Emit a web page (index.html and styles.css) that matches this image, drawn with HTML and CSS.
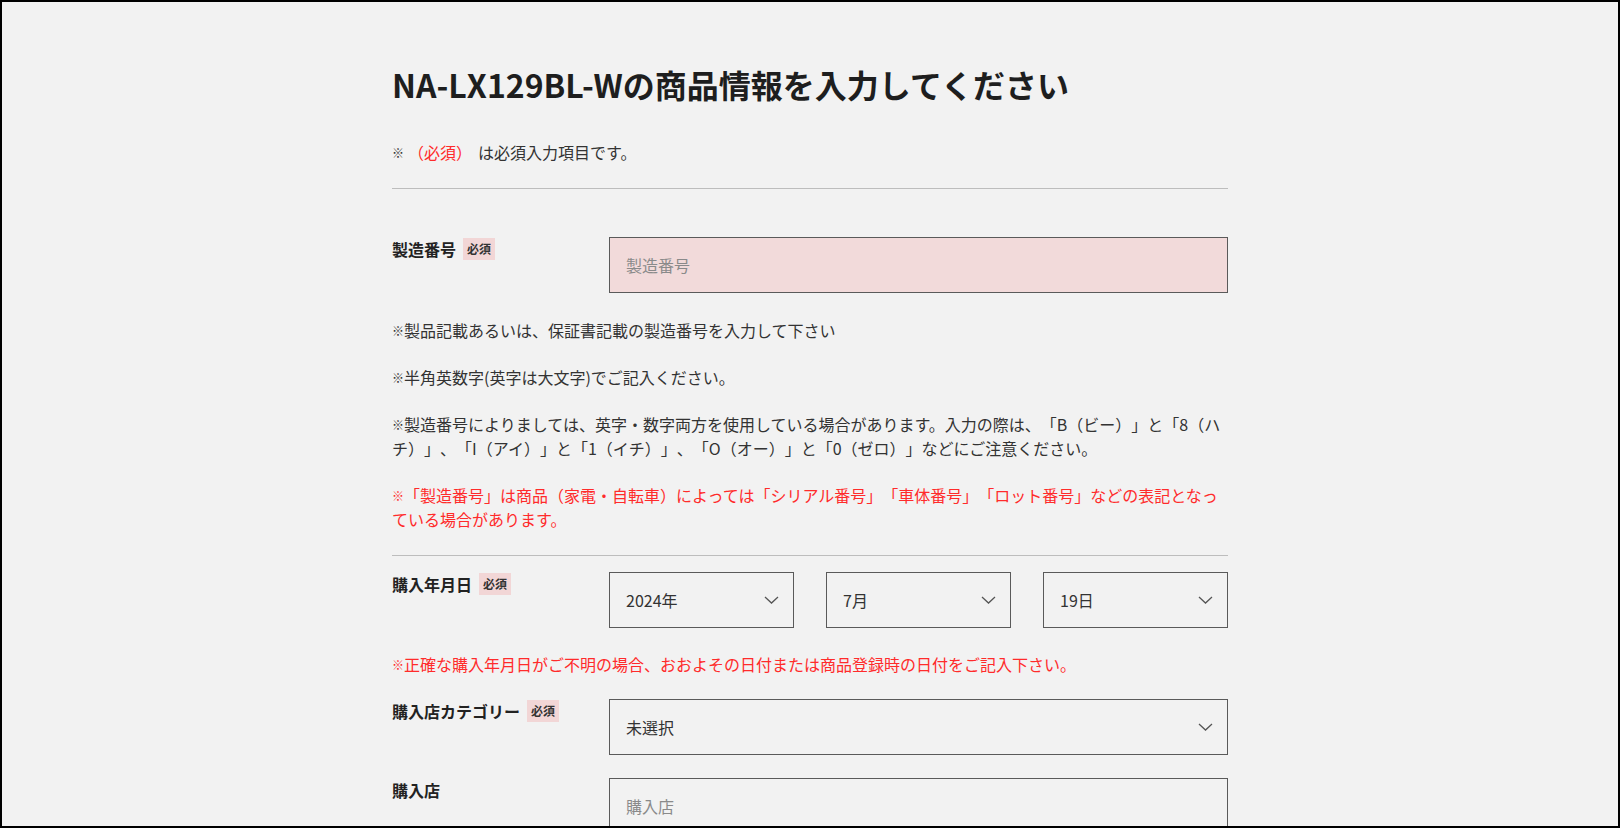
FILE: index.html
```html
<!DOCTYPE html>
<html lang="ja">
<head>
<meta charset="utf-8">
<title>商品情報入力</title>
<link rel="stylesheet" href="styles.css">
</head>
<body>
<main class="page">
  <h1 class="title">NA-LX129BL-Wの商品情報を入力してください</h1>
  <p class="notice"><span class="kome">※</span><span class="red req">（必須）</span>は必須入力項目です。</p>
  <hr class="divider divider-top">

  <section class="section section-serial">
    <div class="row">
      <div class="label">製造番号<span class="badge">必須</span></div>
      <input class="field field-pink" type="text" placeholder="製造番号">
    </div>
    <div class="help">
      <p><span class="kome">※</span>製品記載あるいは、保証書記載の製造番号を入力して下さい</p>
      <p><span class="kome">※</span>半角英数字(英字は大文字)でご記入ください。</p>
      <p><span class="kome">※</span>製造番号によりましては、英字・数字両方を使用している場合があります。入力の際は、「B（ビー）」と「8（ハチ）」、「I（アイ）」と「1（イチ）」、「O（オー）」と「0（ゼロ）」などにご注意ください。</p>
      <p class="red"><span class="kome">※</span>「製造番号」は商品（家電・自転車）によっては「シリアル番号」「車体番号」「ロット番号」などの表記となっている場合があります。</p>
    </div>
  </section>

  <hr class="divider">

  <section class="section section-date">
    <div class="row">
      <div class="label">購入年月日<span class="badge">必須</span></div>
      <div class="date-grid">
        <div class="select-wrap">
          <select class="field select"><option>2024年</option></select>
          <svg class="chev" width="15" height="8" viewBox="0 0 15 8"><path d="M1 1 L7.5 7 L14 1" fill="none" stroke="#555" stroke-width="1.3"/></svg>
        </div>
        <div class="select-wrap">
          <select class="field select"><option>7月</option></select>
          <svg class="chev" width="15" height="8" viewBox="0 0 15 8"><path d="M1 1 L7.5 7 L14 1" fill="none" stroke="#555" stroke-width="1.3"/></svg>
        </div>
        <div class="select-wrap">
          <select class="field select"><option>19日</option></select>
          <svg class="chev" width="15" height="8" viewBox="0 0 15 8"><path d="M1 1 L7.5 7 L14 1" fill="none" stroke="#555" stroke-width="1.3"/></svg>
        </div>
      </div>
    </div>
    <p class="red date-note"><span class="kome">※</span>正確な購入年月日がご不明の場合、おおよその日付または商品登録時の日付をご記入下さい。</p>

    <div class="row row-gap">
      <div class="label">購入店カテゴリー<span class="badge">必須</span></div>
      <div class="select-wrap">
        <select class="field select"><option>未選択</option></select>
        <svg class="chev" width="15" height="8" viewBox="0 0 15 8"><path d="M1 1 L7.5 7 L14 1" fill="none" stroke="#555" stroke-width="1.3"/></svg>
      </div>
    </div>

    <div class="row row-gap">
      <div class="label">購入店</div>
      <input class="field" type="text" placeholder="購入店">
    </div>
  </section>
</main>
</body>
</html>
```

FILE: styles.css
```css
html, body {
  margin: 0;
  padding: 0;
}

body {
  height: 100vh;
  box-sizing: border-box;
  border: 2px solid #000;
  overflow: hidden;
  background: #f2f2f2;
  color: #333;
  font-family: "Noto Sans CJK JP", "Noto Sans", sans-serif;
  font-size: 16px;
  line-height: 24px;
  text-spacing-trim: space-all;
}

.page {
  width: 836px;
  margin: 0 auto;
  padding-top: 58px;
}

.title {
  margin: 0;
  font-size: 32px;
  line-height: 48px;
  font-weight: 700;
  color: #1e1e1e;
}

.notice {
  margin: 32px 0 0;
}

.req {
  margin: 0 6px 0 4px;
}

.kome {
  font-size: 12px;
  line-height: 0;
  vertical-align: 1px;
}

.divider {
  margin: 24px 0 0;
  border: 0;
  border-top: 1px solid #bdbdbd;
  height: 0;
}

.divider-top + .section {
  margin-top: 48px;
}

.section-date {
  margin-top: 16px;
}

.row {
  display: grid;
  grid-template-columns: 217px 1fr;
  align-items: start;
}

.row-gap {
  margin-top: 23px;
}

.label {
  display: flex;
  align-items: center;
  gap: 7px;
  font-weight: 700;
  line-height: 24px;
  color: #222;
}

.badge {
  display: inline-block;
  background: #f2d6d6;
  color: #333;
  font-size: 12px;
  line-height: 22px;
  padding: 0 4px;
  font-weight: 700;
}

.field {
  box-sizing: border-box;
  width: 100%;
  height: 56px;
  margin: 0;
  border: 1px solid #5a5a5a;
  border-radius: 0;
  background: transparent;
  padding: 0 16px;
  font-family: inherit;
  font-size: 16px;
  color: #333;
  outline: none;
}

.field::placeholder {
  color: #8a8a8a;
}

.field-pink {
  background: #f2dada;
}

.help {
  margin-top: 25px;
}

.help p {
  margin: 0 0 23px;
}

.help p:last-child {
  margin-bottom: 0;
}

.red {
  color: #ff2b2b;
}

.date-grid {
  display: grid;
  grid-template-columns: repeat(3, 1fr);
  gap: 32px;
}

.select-wrap {
  position: relative;
}

.select {
  appearance: none;
  -webkit-appearance: none;
  display: block;
}

.chev {
  position: absolute;
  right: 15px;
  top: 24px;
  pointer-events: none;
}

.date-note {
  margin: 24px 0 0;
}
```
